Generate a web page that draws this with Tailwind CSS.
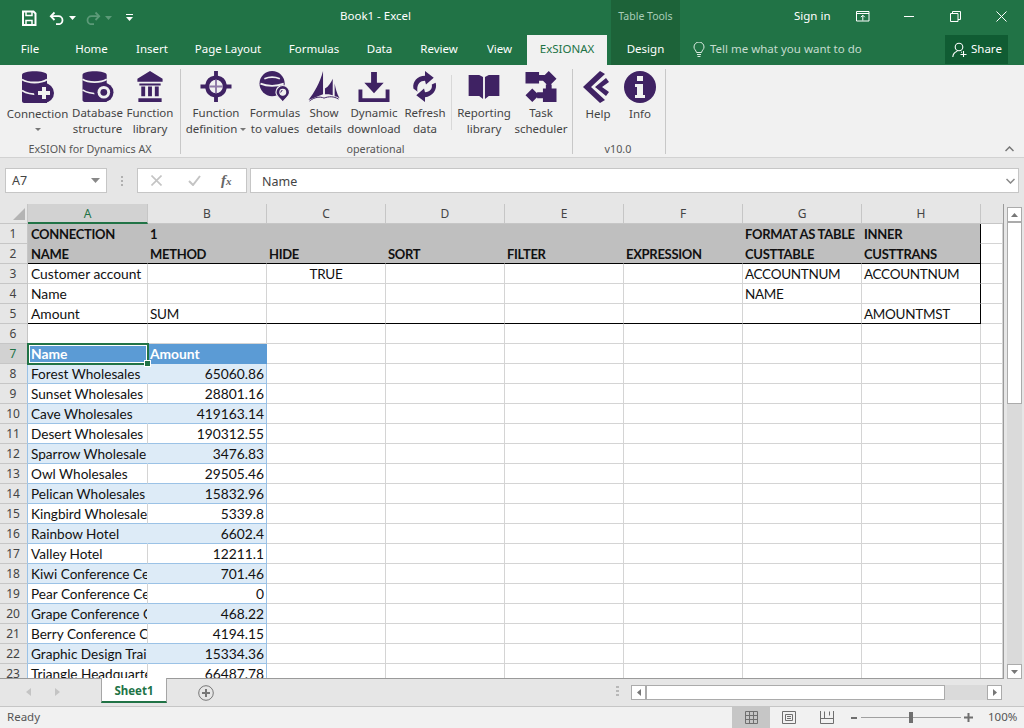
<!DOCTYPE html>
<html lang="en">
<head>
<meta charset="UTF-8" />
<title>Book1 - Excel</title>
<script src="https://cdn.jsdelivr.net/npm/@tailwindcss/browser@4"></script>
</head>
<body class="w-[1024px] h-[728px] overflow-hidden bg-[#e6e6e6] font-['Noto_Sans',sans-serif] text-[11.5px]">

<!-- Title bar -->
<div class="h-[35px] bg-[#217346] flex items-center text-white relative">
  <div class="flex items-center pl-[21px] w-[340px]">
    <svg width="16" height="16" viewBox="0 0 16 16" fill="none" stroke="#fff" stroke-width="2"><path d="M2 1.5h10.500l2 2V15H2z"/><path d="M5 2v3.500h6V2M5 15v-4.500h6V15" stroke-width="1.5"/></svg>
    <svg class="ml-[12px]" width="16" height="14" viewBox="0 0 16 14" fill="none" stroke="#fff" stroke-width="1.8"><path d="M5.500 1.500 1.800 5.200 5.500 9"/><path d="M2 5.200h7.500a4 4 0 0 1 0 8H7"/></svg>
    <svg class="ml-[4px]" width="7" height="4"><path d="M0 0h7L3.500 4z" fill="#fff"/></svg>
    <svg class="ml-[9px]" width="16" height="14" viewBox="0 0 16 14" fill="none" stroke="#5c9a78" stroke-width="1.8"><path d="M10.500 1.500 14.200 5.200 10.500 9"/><path d="M14 5.200H6.500a4 4 0 0 0 0 8H9"/></svg>
    <svg class="ml-[4px]" width="7" height="4"><path d="M0 0h7L3.500 4z" fill="#5c9a78"/></svg>
    <svg class="ml-[14px]" width="7" height="8"><path d="M0 0h7v1H0zM0 3h7L3.500 7z" fill="#fff"/></svg>
  </div>
  <div class="w-[271px] pb-[3px]">Book1 - Excel</div>
  <div class="w-[69px] h-[35px] bg-[#1d6339] text-center leading-[32px] text-[10.5px] text-[#a9cdb8]">Table Tools</div>
  <div class="ml-[114px] pb-[3px] w-[62px]">Sign in</div>
  <svg class="mb-[3px]" width="14" height="11" viewBox="0 0 14 11" fill="none" stroke="#fff"><path d="M.5.5h12.500v9.500H.5zM.5 2.500h12.500M6.800 9.500V4.500M4.800 6.200l2-2 2 2"/></svg>
  <div class="ml-[34px] mb-[3px] w-[10px] h-px bg-white"></div>
  <svg class="ml-[36px] mb-[3px]" width="11" height="11" viewBox="0 0 11 11" fill="none" stroke="#fff"><path d="M.5 2.500h7.500V10.500H.5zM2.500 2.500V.5h8v8H8"/></svg>
  <svg class="ml-[35px] mb-[3px]" width="11" height="11" viewBox="0 0 11 11" fill="none" stroke="#fff"><path d="M.5.5l10 10M10.500.5l-10 10"/></svg>
</div>

<!-- Tabs -->
<div class="h-[30px] bg-[#217346] flex text-white relative">
  <div class="w-[60px] text-center leading-[28px]">File</div>
  <div class="w-[63px] text-center leading-[28px]">Home</div>
  <div class="w-[58px] text-center leading-[28px]">Insert</div>
  <div class="w-[94px] text-center leading-[28px]">Page Layout</div>
  <div class="w-[78px] text-center leading-[28px]">Formulas</div>
  <div class="w-[53px] text-center leading-[28px]">Data</div>
  <div class="w-[66px] text-center leading-[28px]">Review</div>
  <div class="w-[55px] text-center leading-[28px]">View</div>
  <div class="w-[80px] bg-[#f1f1f1] text-[#217346] text-center leading-[28px]">ExSIONAX</div>
  <div class="w-[4px]"></div>
  <div class="w-[69px] bg-[#1d6339] text-center leading-[28px]">Design</div>
  <div class="w-[13px]"></div>
  <div class="flex items-center h-[29px] text-[#c5dccf]">
    <svg width="12" height="15" viewBox="0 0 12 15" fill="none" stroke="#dcebe2"><path d="M3.500 10.500C3 8 1 7.500 1 5a5 5 0 0 1 10 0c0 2.500-2 3-2.500 5.500zM4 12.500h4M4.500 14.500h3"/></svg>
    <span class="ml-[5px] w-[235px] pb-px">Tell me what you want to do</span>
  </div>
  <div class="w-[63px] h-[29px] bg-[#105c33] flex items-center pl-[7px] gap-[3px]">
    <svg width="16" height="16" viewBox="0 0 16 16" fill="none" stroke="#fff" stroke-width="1.100"><circle cx="7" cy="5" r="3.800"/><path d="M.8 15c.2-3 2-5 4.500-5.800M9 10.300h1M11.500 9v6M8.500 12.500h6"/></svg>
    <span class="pb-px">Share</span>
  </div>
</div>

<!-- Ribbon -->
<div class="h-[93px] bg-[#f1f1f1] border-b border-[#d2d2d2] flex text-[#444] leading-[16px] relative">
  <!-- group: ExSION for Dynamics AX -->
  <div class="w-[181px] h-[85px] mt-[4px] border-r border-[#c8c8c8] flex flex-col">
    <div class="h-[68px] shrink-0 flex pl-[5px]">
      <div class="w-[65px] flex flex-col items-center">
        <svg class="mt-[2px] mb-[3px]" width="32" height="32" viewBox="0 0 32 32"><path fill="#3f2263" d="M0 4C0-1 25-1 25 4V32H2c-1 0-2-1-2-2z"/><path fill="none" stroke="#f1f1f1" stroke-width="1.800" d="M0 8.500c6 4 19 4 25 0M0 19.500c6 4 12 4 17 4"/><circle cx="22" cy="22" r="10" fill="#3f2263"/><path fill="#f1f1f1" d="M20 16h4v4h4v4h-4v4h-4v-4h-4v-4h4z"/></svg>
        <span class="whitespace-nowrap">Connection</span>
        <svg class="mt-[6px]" width="6" height="3"><path d="M0 0h6L3 3z" fill="#777"/></svg>
      </div>
      <div class="w-[55px] flex flex-col items-center">
        <svg class="mt-[2px] mb-[3px]" width="32" height="32" viewBox="0 0 32 32"><path fill="#3f2263" d="M0 4C0-1 25-1 25 4V32H2c-1 0-2-1-2-2z"/><path fill="none" stroke="#f1f1f1" stroke-width="1.800" d="M0 8.500c6 4 19 4 25 0M0 19.500c6 4 12 4 17 4"/><circle cx="22" cy="22" r="10" fill="#3f2263"/><circle cx="22" cy="22" r="6.500" fill="#f1f1f1"/><circle cx="22" cy="22" r="3.500" fill="#3f2263"/></svg>
        <span class="whitespace-nowrap text-center">Database<br>structure</span>
      </div>
      <div class="w-[50px] flex flex-col items-center">
        <svg class="mt-[2px] mb-[3px]" width="26" height="32" viewBox="0 0 26 32"><path fill="#3f2263" d="M13 0 26 8v3H0V8zM2 13h22v2H2zM4 16h4v10H4zM11 16h4v10h-4zM18 16h4v10h-4zM1 28h24v4H1z"/></svg>
        <span class="whitespace-nowrap text-center">Function<br>library</span>
      </div>
    </div>
    <div class="mt-[4px] text-center text-[10.75px] text-[#555]">ExSION for Dynamics AX</div>
  </div>
  <!-- group: operational -->
  <div class="w-[392px] h-[85px] mt-[4px] border-r border-[#c8c8c8] flex flex-col">
    <div class="h-[68px] shrink-0 flex pl-[6px]">
      <div class="w-[58px] flex flex-col items-center">
        <svg class="mt-[2px] mb-[3px]" width="32" height="32" viewBox="0 0 32 32"><path fill="#3f2263" fill-rule="evenodd" d="M14 0h4v5a11 11 0 0 1 9 9h5v4h-5a11 11 0 0 1-9 9v5h-4v-5a11 11 0 0 1-9-9H0v-4h5a11 11 0 0 1 9-9zM16 9a7 7 0 1 0 0 14 7 7 0 0 0 0-14z"/><path fill="#8f7ba8" d="M15 9h2v6h6v2h-6v6h-2v-6H9v-2h6z"/></svg>
        <span class="whitespace-nowrap text-center">Function<br>definition <span class="inline-block align-middle w-0 h-0 border-x-[3px] border-t-[3px] border-x-transparent border-t-[#777]"></span></span>
      </div>
      <div class="w-[60px] flex flex-col items-center">
        <svg class="mt-[2px] mb-[3px]" width="32" height="32" viewBox="0 0 32 32"><circle cx="13" cy="13" r="13" fill="#3f2263"/><path fill="none" stroke="#f1f1f1" stroke-width="1.800" d="M5 8c5-2 11-2 16 0M1 13c7 3 17 3 24 0"/><path fill="#3f2263" stroke="#f1f1f1" stroke-width="1.200" fill-rule="evenodd" d="M24 15a7 7 0 0 1 7 7c0 4-4 6-7 10-3-4-7-6-7-10a7 7 0 0 1 7-7zm0 4a3 3 0 1 0 0 6 3 3 0 0 0 0-6z"/></svg>
        <span class="whitespace-nowrap text-center">Formulas<br>to values</span>
      </div>
      <div class="w-[38px] flex flex-col items-center">
        <svg class="mt-[2px] mb-[3px]" width="32" height="32" viewBox="0 0 32 32"><path fill="#3f2263" d="M15 0v24L0 30C6 22 12 12 15 0zM25 8v17c-3-1-5-1-8-1V18c4-2 6-6 8-10zM27 13c1 5 2 10 5 15-2-1-3-2-5-2z"/><path fill="none" stroke="#3f2263" d="M1 31c5-4 11-5 15-3 5-2 10-2 15 1"/></svg>
        <span class="whitespace-nowrap text-center">Show<br>details</span>
      </div>
      <div class="w-[62px] flex flex-col items-center">
        <svg class="mt-[2px] mb-[3px]" width="32" height="32" viewBox="0 0 32 32"><path fill="#3f2263" d="M13 1h6v11h7L16 23 6 12h7zM0 19h4v9h24v-9h4v13H0z"/></svg>
        <span class="whitespace-nowrap text-center">Dynamic<br>download</span>
      </div>
      <div class="w-[40px] flex flex-col items-center">
        <svg class="mt-[2px] mb-[3px]" width="26" height="32" viewBox="0 0 26 32"><path fill="#3f2263" d="M13 0l9 7-8 7-1-4c-5 0-8 3-8 9 0 1 0 2 1 3L1 18c-1-7 4-13 12-13zM24 12c2 7-3 14-11 15v5l-9-7 8-7 1 4c5 0 8-4 7-8z"/></svg>
        <span class="whitespace-nowrap text-center">Refresh<br>data</span>
      </div>
      <div class="w-px h-[55px] bg-[#d8d8d8] ml-[6px] mr-[3px] mt-[6px]"></div>
      <div class="w-[58px] flex flex-col items-center">
        <svg class="mt-[6px] mb-[6px]" width="32" height="25" viewBox="0 0 32 25"><path fill="#3f2263" d="M0 0h11l4 2v23l-4-3H0zM32 0H21l-4 2v23l4-3h11z"/></svg>
        <span class="whitespace-nowrap text-center">Reporting<br>library</span>
      </div>
      <div class="w-[56px] flex flex-col items-center">
        <svg class="mt-[2px] mb-[3px]" width="32" height="32" viewBox="0 0 32 32"><path fill="#3f2263" d="M0 1h14v12H0zM24 0l8 8-8 8-8-8zM14 4h6v6h-6zM21 14h6v6h-6zM18 18h14v14H18zM7 18l7 7-7 7-7-7zM12 22h8v6h-8z"/></svg>
        <span class="whitespace-nowrap text-center">Task<br>scheduler</span>
      </div>
    </div>
    <div class="mt-[4px] text-center text-[10.75px] text-[#555] pr-[2px]">operational</div>
  </div>
  <!-- group: v10.0 -->
  <div class="w-[93px] h-[85px] mt-[4px] border-r border-[#c8c8c8] flex flex-col">
    <div class="h-[68px] shrink-0 flex pl-[7px]">
      <div class="w-[36px] flex flex-col items-center">
        <svg class="mt-[2px] mb-[3px] -ml-[4px]" width="26" height="32" viewBox="0 0 26 32"><path fill="#3f2263" d="M17 0l5 3L8 16l14 13-5 3L0 16zM23 7l3 4-7 5 7 5-3 4-11-9z"/></svg>
        <span>Help</span>
      </div>
      <div class="w-[6px]"></div>
      <div class="w-[36px] flex flex-col items-center">
        <svg class="mt-[2px] mb-[3px]" width="32" height="32" viewBox="0 0 32 32"><circle cx="16" cy="16" r="16" fill="#3f2263"/><path fill="#f1f1f1" d="M13 5h6v5h-6zM11 13h8v11h2v3H11v-3h2v-8h-2z"/></svg>
        <span>Info</span>
      </div>
    </div>
    <div class="mt-[4px] text-center text-[10.75px] text-[#555] pr-[2px]">v10.0</div>
  </div>
  <svg class="absolute left-[1005px] top-[81px]" width="9" height="6" viewBox="0 0 9 6" fill="none" stroke="#777" stroke-width="1.500"><path d="M.5 5l4-4 4 4"/></svg>
</div>

<!-- Formula bar -->
<div class="h-[46px] flex pt-[10px] text-[#444] text-[12.5px]">
  <div class="ml-[5px] w-[102px] h-[25px] bg-white border border-[#c6c6c6] flex items-center justify-between pl-[6px] pr-[6px]">
    <span class="mt-[2px]">A7</span>
    <svg width="9" height="5"><path d="M0 0h9L4.500 5z" fill="#888"/></svg>
  </div>
  <div class="w-[30px] flex flex-col items-center justify-center gap-[2px] h-[25px]">
    <i class="w-[2px] h-[2px] bg-[#b0b0b0]"></i><i class="w-[2px] h-[2px] bg-[#b0b0b0]"></i><i class="w-[2px] h-[2px] bg-[#b0b0b0]"></i>
  </div>
  <div class="w-[110px] h-[25px] bg-white border border-[#c6c6c6] flex items-center pl-[13px]">
    <svg width="11" height="11" viewBox="0 0 11 11" fill="none" stroke="#c4c4c4" stroke-width="1.600"><path d="M.5.5l10 10M10.500.5l-10 10"/></svg>
    <svg class="ml-[26px]" width="13" height="11" viewBox="0 0 13 11" fill="none" stroke="#c4c4c4" stroke-width="2"><path d="M1 6l4 4 7-9"/></svg>
    <span class="ml-[20px] text-[#666] text-[15px] italic font-bold font-['Liberation_Serif',serif]">f<span class="text-[11px]">x</span></span>
  </div>
  <div class="ml-[3px] w-[769px] h-[25px] bg-white border border-[#c6c6c6] flex items-center justify-between pl-[11px] pr-[3px]">
    <span class="mt-[4px]">Name</span>
    <svg width="9" height="6" viewBox="0 0 9 6" fill="none" stroke="#888" stroke-width="1.500"><path d="M.5 1l4 4 4-4"/></svg>
  </div>
</div>

<!-- Sheet area -->
<div class="h-[475px] flex">
  <div class="w-[1004px] h-[475px] overflow-hidden relative bg-white border-r border-b border-[#9a9a9a]">
    <div id="sheet" class="font-['Lato',sans-serif] text-[13.8px] text-[#111]"></div>
    <!-- selected cell -->
    <div class="absolute left-[27px] top-[139px] w-[122px] h-[22px] border-2 border-[#217346]">
      <div class="w-full h-full border border-white"></div>
    </div>
    <div class="absolute left-[144px] top-[156px] w-[7px] h-[7px] bg-[#217346] border border-white"></div>
  </div>
  <!-- vertical scrollbar -->
  <div class="w-[20px] flex flex-col items-center pt-[3px] pl-[1px]">
    <div class="w-[15px] h-[15px] bg-white border border-[#ababab] flex items-center justify-center"><svg width="7" height="4"><path d="M0 4h7L3.500 0z" fill="#777"/></svg></div>
    <div class="w-[15px] h-[442px] bg-[#dadada] flex flex-col">
      <div class="w-[15px] h-[182px] bg-white border border-[#ababab]"></div>
    </div>
    <div class="w-[15px] h-[15px] bg-white border border-[#ababab] flex items-center justify-center"><svg width="7" height="4"><path d="M0 0h7L3.500 4z" fill="#777"/></svg></div>
  </div>
</div>

<!-- Sheet tabs -->
<div class="h-[27px] flex items-start relative">
  <svg class="ml-[26px] mt-[9px]" width="5" height="8"><path d="M5 0v8L0 4z" fill="#c4c4c4"/></svg>
  <svg class="ml-[24px] mt-[9px]" width="5" height="8"><path d="M0 0v8l5-4z" fill="#c4c4c4"/></svg>
  <div class="ml-[41px] w-[66px] h-[25px] bg-white border-x border-[#a6a6a6] border-b-2 border-b-[#217346] -mt-px text-center text-[#217346] font-bold leading-[25px]">Sheet1</div>
  <svg class="ml-[31px] mt-[6px]" width="16" height="16" viewBox="0 0 16 16" fill="none" stroke="#777"><circle cx="8" cy="8" r="7.300"/><path d="M8 4v8M4 8h8" stroke-width="2"/></svg>
  <div class="ml-[402px] mt-[7px] flex flex-col gap-[2px]">
    <i class="w-[3px] h-[2px] bg-[#b8b8b8]"></i><i class="w-[3px] h-[2px] bg-[#b8b8b8]"></i><i class="w-[3px] h-[2px] bg-[#b8b8b8]"></i>
  </div>
  <div class="ml-[12px] mt-[6px] w-[371px] h-[15px] flex bg-[#dadada]">
    <div class="w-[15px] h-[15px] bg-white border border-[#ababab] flex items-center justify-center"><svg width="4" height="7"><path d="M4 0v7L0 3.500z" fill="#777"/></svg></div>
    <div class="w-[299px] h-[15px] bg-white border border-[#ababab]"></div>
    <div class="flex-1"></div>
    <div class="w-[15px] h-[15px] bg-white border border-[#ababab] flex items-center justify-center"><svg width="4" height="7"><path d="M0 0v7l4-3.500z" fill="#777"/></svg></div>
  </div>
</div>

<!-- Status bar -->
<div class="h-[22px] bg-[#f1f1f1] border-t border-[#c6c6c6] flex items-center text-[#555]">
  <span class="ml-[7px] w-[725px] pb-[2px]">Ready</span>
  <div class="w-[38px] h-[21px] bg-[#c6c6c6] flex items-center justify-center">
    <svg width="13" height="13" viewBox="0 0 13 13" fill="none" stroke="#6f6f6f"><path d="M.5.5h12v12H.5zM4.500.5v12M8.500.5v12M.5 4.500h12M.5 8.500h12"/></svg>
  </div>
  <svg class="ml-[12px]" width="14" height="13" viewBox="0 0 14 13" fill="none" stroke="#6f6f6f"><path d="M.5.5h13v12H.5zM3.500 3.500h7v6h-7zM5 5.500h4M5 7.500h4"/></svg>
  <svg class="ml-[24px]" width="14" height="13" viewBox="0 0 14 13" fill="none" stroke="#6f6f6f"><path d="M.5 0v12.500h13V0M.5 7.500h13M4.500.5v7M9.500.5v4"/></svg>
  <div class="ml-[17px] w-[6px] h-[2px] bg-[#6f6f6f]"></div>
  <div class="ml-[4px] w-[100px] h-px bg-[#a0a0a0] relative"><div class="absolute left-[48px] -top-[5px] w-[4px] h-[11px] bg-[#6f6f6f]"></div></div>
  <svg class="ml-[3px]" width="9" height="9"><path d="M3.500 0h2v3.500H9v2H5.500V9h-2V5.500H0v-2h3.500z" fill="#6f6f6f"/></svg>
  <span class="ml-[15px] pb-[2px]">100%</span>
</div>

<script>
const cols = ['A','B','C','D','E','F','G','H'];
const top5 = [
  ['CONNECTION','1','','','','','FORMAT AS TABLE','INNER'],
  ['NAME','METHOD','HIDE','SORT','FILTER','EXPRESSION','CUSTTABLE','CUSTTRANS'],
  ['Customer account','','TRUE','','','','ACCOUNTNUM','ACCOUNTNUM'],
  ['Name','','','','','','NAME',''],
  ['Amount','SUM','','','','','','AMOUNTMST'],
];
const table = [
  ['Forest Wholesales','65060.86'],['Sunset Wholesales','28801.16'],['Cave Wholesales','419163.14'],
  ['Desert Wholesales','190312.55'],['Sparrow Wholesale','3476.83'],['Owl Wholesales','29505.46'],
  ['Pelican Wholesales','15832.96'],['Kingbird Wholesale','5339.8'],['Rainbow Hotel','6602.4'],
  ['Valley Hotel','12211.1'],['Kiwi Conference Ce','701.46'],['Pear Conference Ce','0'],
  ['Grape Conference C','468.22'],['Berry Conference C','4194.15'],['Graphic Design Trai','15334.36'],
  ['Triangle Headquarte','66487.78'],
];
const rowCls = "grid grid-cols-[28px_120px_119px_119px_119px_119px_119px_119px_119px_22px] h-[20px]";
const cellCls = "h-[20px] overflow-hidden whitespace-nowrap border-r border-b";
const headCls = "h-[20px] text-center leading-[19px] text-[12px] font-['Noto_Sans',sans-serif] border-r";

let html = '<div class="' + rowCls + '">';
html += '<div class="h-[20px] bg-[#e6e6e6] border-r border-b border-[#c6c6c6] flex items-end justify-end pr-[2px] pb-[3px]"><svg width="12" height="12"><path d="M12 0v12H0z" fill="#b4b4b4"/></svg></div>';
cols.forEach((c, i) => {
  html += '<div class="' + headCls + (i == 0 ? " bg-[#d2d2d2] text-[#217346] border-[#c6c6c6] border-b-2 border-b-[#217346]" : " bg-[#e6e6e6] text-[#444] border-[#c6c6c6] border-b") + '">' + c + '</div>';
});
html += '<div class="h-[20px] bg-[#e6e6e6] border-b border-[#c6c6c6]"></div></div>';

function rowHead(n) {
  const sel = n == 7 ? " bg-[#d2d2d2] text-[#217346]" : " bg-[#e6e6e6] text-[#444]";
  const edge = n >= 8 ? " border-b-[#c6c6c6] border-r-[#9bc2e6]" : " border-[#c6c6c6]";
  return '<div class="h-[20px] border-r border-b text-center pr-px leading-[19px] text-[12px] font-[\'Noto_Sans\',sans-serif]' + edge + sel + '">' + n + '</div>';
}
const plain = cellCls + " border-[#d4d4d4] leading-[19px]";

for (let r = 1; r <= 23; r++) {
  html += '<div class="' + rowCls + '">' + rowHead(r);
  for (let c = 0; c < 9; c++) {
    let cls = plain, txt = '';
    if (r <= 5 && c < 8) {
      txt = top5[r - 1][c];
      const caps = txt != '' && txt == txt.toUpperCase();
      if (r == 1) cls = cellCls + " bg-[#bfbfbf] font-bold border-b-[#bfbfbf] border-r-[#bfbfbf] text-[13px] tracking-[-0.3px] leading-[21px]";
      if (r == 2) cls = cellCls + " bg-[#bfbfbf] font-bold border-b-black border-r-[#bfbfbf] text-[13px] tracking-[-0.3px] leading-[21px]";
      if (r == 3 || r == 4) cls = cellCls + " border-[#d4d4d4]" + (caps ? " leading-[21px]" : " leading-[19px]");
      if (r == 5) cls = cellCls + " border-r-[#d4d4d4] border-b-black" + (caps ? " leading-[21px]" : " leading-[19px]");
      if (r > 2 && caps) cls += " text-[13.5px] tracking-[-0.3px]";
      if (c == 7) cls += " border-r-black";
      if (r == 3 && c == 2) cls += " text-center";
    }
    if (r == 7 && c < 2) {
      txt = c == 0 ? 'Name' : 'Amount';
      cls = cellCls + " bg-[#5b9bd5] text-white font-bold border-[#5b9bd5] leading-[19px]";
    }
    if (r >= 8 && c < 2) {
      txt = table[r - 8][c];
      const even = r % 2 == 0;
      cls = cellCls + (even ? " bg-[#ddebf7]" : " bg-white") + " border-b-[#9bc2e6]";
      if (c == 1) cls += " border-r-[#9bc2e6] text-right leading-[19px]";
      else cls += (even ? " border-r-[#ddebf7]" : " border-r-[#d4d4d4]") + " text-[13.6px] leading-[21px]";
    }
    cls += c == 0 ? " pl-[3px] pr-0" : " px-[2px]";
    html += '<div class="' + cls + '">' + txt + '</div>';
  }
  html += '</div>';
}
document.getElementById('sheet').innerHTML = html;
</script>
</body>
</html>
